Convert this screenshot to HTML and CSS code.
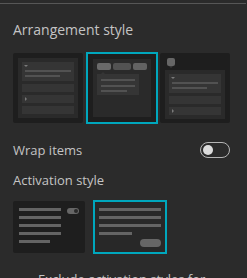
FILE: index.html
```html
<!DOCTYPE html>
<html>
<head>
<meta charset="utf-8">
<link rel="stylesheet" href="styles.css">
</head>
<body>
<div class="rule"></div>
<div class="content">
  <div class="title t1">Arrangement style</div>
  <div class="arr-row">
    <div class="card">
      <div class="panel">
        <div class="item open"><span class="chev-d"></span><span class="ln l1"></span><span class="ln l2"></span></div>
        <div class="row"></div>
        <div class="row"><span class="chev-r"></span></div>
        <div class="row"></div>
      </div>
    </div>
    <div class="card sel">
      <div class="panel tabs-panel">
        <div class="tabs"><span class="tab a"></span><span class="tab b"></span><span class="tab c"></span></div>
        <div class="drop"><span class="ln d1"></span><span class="ln d1"></span><span class="ln d2"></span></div>
      </div>
    </div>
    <div class="card icon-card">
      <div class="sq"></div>
      <div class="panel short">
        <div class="item open"><span class="chev-d"></span><span class="ln l1"></span><span class="ln l2"></span></div>
        <div class="row"></div>
        <div class="row"><span class="chev-r"></span></div>
      </div>
    </div>
  </div>
  <div class="wrap-row">
    <span class="label">Wrap items</span>
    <span class="switch"><span class="knob"></span></span>
  </div>
  <div class="title t2">Activation style</div>
  <div class="act-row">
    <div class="acard">
      <div class="bars">
        <span class="bar"></span><span class="bar"></span><span class="bar"></span><span class="bar"></span><span class="bar short-bar"></span>
      </div>
      <span class="mini-toggle"><span class="mini-knob"></span></span>
    </div>
    <div class="acard bcard">
      <span class="bar"></span><span class="bar"></span><span class="bar"></span><span class="bar short-bar"></span>
      <span class="pill"></span>
    </div>
  </div>
  <div class="exclude">Exclude activation styles for</div>
</div>
</body>
</html>
```
FILE: styles.css
```css
html, body {
  margin: 0;
  padding: 0;
  overflow: hidden;
  background: #2b2b2b;
}
body {
  font-family: "Open Sans", "Noto Sans", sans-serif;
  color: #c4c4c4;
  width: 247px;
  height: 278px;
}
.rule {
  margin-top: 3px;
  height: 1px;
  margin-right: 1px;
  background: #575757;
}
.content {
  padding: 0 13px;
}
.title {
  font-size: 14px;
  line-height: 20px;
}
.t1 { margin-top: 16px; }
.arr-row {
  display: flex;
  align-items: center;
  margin-top: 12px;
  height: 72px;
}
.card {
  width: 60px;
  height: 60px;
  padding: 5px;
  background: #1e1e1e;
  border-radius: 2px;
  display: flex;
  flex-direction: column;
}
.card.sel {
  width: 58px;
  height: 58px;
  border: 2px solid #00a7bd;
  margin: 0 2px 0 3px;
  border-radius: 0;
}
.panel {
  flex: 1;
  background: #2a2a2a;
  padding: 4px;
  display: flex;
  flex-direction: column;
  gap: 3px;
}
.item {
  height: 19px;
  background: #353535;
  position: relative;
}
.row {
  height: 8px;
  background: #353535;
  position: relative;
}
.chev-d {
  position: absolute;
  left: 2px;
  top: 3px;
  width: 0;
  height: 0;
  border-left: 2px solid transparent;
  border-right: 2px solid transparent;
  border-top: 2px solid #7a7a7a;
}
.chev-r {
  position: absolute;
  left: 3px;
  top: 2px;
  width: 0;
  height: 0;
  border-top: 2px solid transparent;
  border-bottom: 2px solid transparent;
  border-left: 2px solid #7a7a7a;
}
.ln {
  display: block;
  height: 2px;
  background: #525252;
}
.item .ln { position: absolute; left: 3px; }
.item .l1 { top: 8px; width: 46px; }
.item .l2 { top: 13px; width: 35px; }
.tabs-panel {
  gap: 0;
}
.tabs {
  display: flex;
  gap: 2px;
  height: 7px;
}
.tab {
  border-radius: 2px;
  height: 7px;
}
.tab.a { width: 14px; background: #6a6a6a; }
.tab.b { width: 18px; background: #525252; }
.tab.c { width: 14px; background: #626262; }
.drop {
  position: relative;
  margin-top: 4px;
  width: 34px;
  height: 16px;
  padding: 5px 4px 0;
  background: #353535;
  display: flex;
  flex-direction: column;
  gap: 3.5px;
}
.drop::before {
  content: "";
  position: absolute;
  left: 4px;
  top: -2px;
  border-left: 2px solid transparent;
  border-right: 2px solid transparent;
  border-bottom: 2px solid #353535;
}
.drop .d1 { width: 34px; }
.drop .d2 { width: 26px; }
.icon-card .sq {
  width: 8px;
  height: 8px;
  margin-left: 2px;
  background: #666;
  border-radius: 2px;
  margin-bottom: 4px;
  position: relative;
  flex: none;
}
.icon-card .sq::after {
  content: "";
  position: absolute;
  left: 2px;
  top: 8px;
  border-left: 2px solid transparent;
  border-right: 2px solid transparent;
  border-top: 2px solid #3a3a3a;
}
.wrap-row {
  display: flex;
  align-items: center;
  justify-content: space-between;
  margin-top: 18px;
  height: 16px;
  padding-right: 4px;
}
.label {
  font-size: 13px;
  line-height: 14px;
}
.switch {
  height: 14px;
  border: 1px solid #b5b5b5;
  border-radius: 8px;
  display: flex;
  align-items: center;
  padding: 0 2px;
  box-sizing: content-box;
  width: 24px;
}
.knob {
  width: 10px;
  height: 10px;
  border-radius: 50%;
  background: #dcdcdc;
}
.t2 {
  margin-top: 12px;
  font-size: 13px;
}
.act-row {
  display: flex;
  align-items: center;
  gap: 8px;
  margin-top: 10px;
  height: 54px;
}
.acard {
  width: 60px;
  height: 45px;
  padding: 7px 6px 0 6px;
  background: #1e1e1e;
  border-radius: 2px;
  display: flex;
  gap: 6px;
  align-items: flex-start;
}
.bars {
  display: flex;
  flex-direction: column;
  gap: 5px;
}
.bar {
  display: block;
  width: 42px;
  height: 3px;
  background: #646464;
}
.bar.short-bar { width: 31px; }
.mini-toggle {
  width: 12px;
  height: 6px;
  border-radius: 3px;
  background: #666;
  display: flex;
  align-items: center;
  justify-content: flex-end;
  padding-right: 1px;
  box-sizing: border-box;
}
.mini-knob {
  width: 4px;
  height: 4px;
  border-radius: 50%;
  background: #2a2a2a;
}
.bcard {
  width: 62px;
  height: 44px;
  padding: 6px 4px 0 4px;
  border: 2px solid #00a7bd;
  background: #282828;
  border-radius: 0;
  flex-direction: column;
  gap: 5px;
  align-items: stretch;
}
.bcard .bar { width: 62px; }
.bcard .bar.short-bar { width: 33px; }
.pill {
  align-self: flex-end;
  width: 21px;
  height: 8px;
  border-radius: 4px;
  background: #666;
  margin-top: -1px;
}
.exclude {
  margin-top: 15px;
  padding-left: 25px;
  font-size: 13px;
  line-height: 20px;
}
```
